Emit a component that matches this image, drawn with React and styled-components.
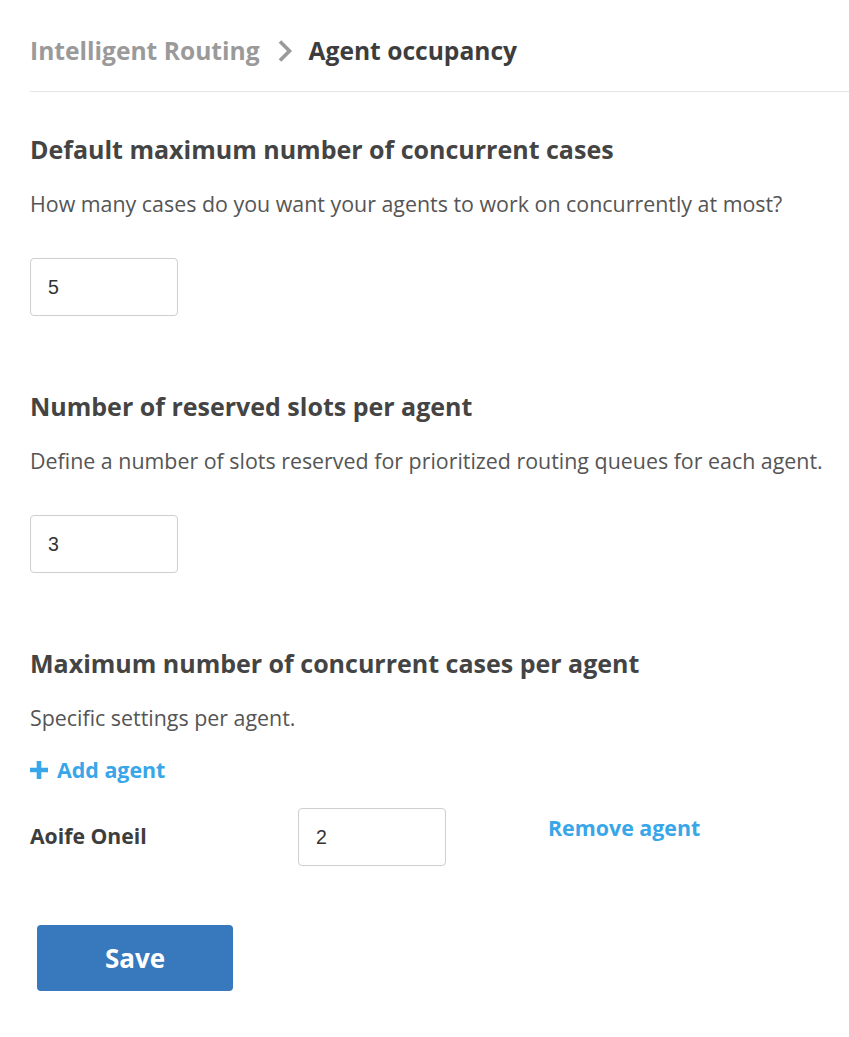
import React from "react";
import styled, { createGlobalStyle } from "styled-components";

const Global = createGlobalStyle`
  html, body { margin: 0; padding: 0; background: #fff; }
  body { font-family: "Open Sans", "Liberation Sans", sans-serif; color: #444; }
  * { box-sizing: border-box; }
`;

const Page = styled.div`
  width: 849px;
  padding: 0 0 40px 30px;
`;

const Breadcrumb = styled.nav`
  display: flex;
  align-items: center;
  height: 92px;
  padding-top: 10px;
  border-bottom: 1px solid #e6e6e6;
  font-size: 24.6px;
  font-weight: 700;
  line-height: 36px;
`;

const Crumb = styled.span`
  color: ${(p) => (p.$current ? "#3d3d3d" : "#9a9a9a")};
`;

const ChevronWrap = styled.span`
  display: inline-flex;
  margin: 0 16px 0 17px;
`;

const Section = styled.section`
  padding-top: ${(p) => p.$top || 40}px;
`;

const Heading = styled.h2`
  margin: 0;
  font-size: 25px;
  font-weight: 700;
  color: #444;
  line-height: 36px;
`;

const Desc = styled.p`
  margin: 22px 0 0;
  font-size: 21.4px;
  color: #555;
  line-height: 30px;
`;

const NumberInput = styled.input`
  display: block;
  width: 148px;
  height: 58px;
  border: 1px solid #cfcfcf;
  border-radius: 4px;
  padding: 0 17px;
  font-family: "Liberation Sans", Arial, sans-serif;
  font-size: 19.5px;
  color: #333;
  margin-top: ${(p) => p.$mt || 0}px;
`;

const AddLink = styled.a`
  display: inline-flex;
  align-items: center;
  gap: 9px;
  margin-top: 22px;
  font-size: 21.4px;
  font-weight: 700;
  line-height: 30px;
  color: #38a6e8;
  text-decoration: none;
`;

const AgentRow = styled.div`
  display: grid;
  grid-template-columns: 268px 250px auto;
  align-items: center;
  margin-top: 23px;
`;

const AgentName = styled.span`
  font-size: 21.2px;
  font-weight: 700;
  color: #3d3d3d;
  line-height: 30px;
  margin-top: -2px;
`;

const RemoveLink = styled.a`
  font-size: 21.4px;
  font-weight: 700;
  line-height: 30px;
  color: #38a6e8;
  margin-bottom: 18px;
`;

const SaveButton = styled.button`
  margin: 59px 0 0 7px;
  width: 196px;
  height: 66px;
  border: none;
  border-radius: 4px;
  background: #3878bd;
  color: #fff;
  font-family: "Open Sans", sans-serif;
  font-size: 26px;
  font-weight: 700;
`;

const Chevron = () => (
  <svg width="16" height="24" viewBox="0 0 16 24">
    <path d="M3 2.5 L12.5 12 L3 21.5" fill="none" stroke="#9a9a9a" strokeWidth="3.6" />
  </svg>
);

const Plus = () => (
  <svg width="18" height="18" viewBox="0 0 18 18">
    <path d="M9 0 V18 M0 9 H18" stroke="#38a6e8" strokeWidth="4.6" />
  </svg>
);

export default function App() {
  return (
    <>
      <Global />
      <Page>
        <Breadcrumb>
          <Crumb>Intelligent Routing</Crumb>
          <ChevronWrap>
            <Chevron />
          </ChevronWrap>
          <Crumb $current>Agent occupancy</Crumb>
        </Breadcrumb>

        <Section $top={39}>
          <Heading>Default maximum number of concurrent cases</Heading>
          <Desc>How many cases do you want your agents to work on concurrently at most?</Desc>
          <NumberInput $mt={39} defaultValue="5" />
        </Section>

        <Section $top={72}>
          <Heading>Number of reserved slots per agent</Heading>
          <Desc>Define a number of slots reserved for prioritized routing queues for each agent.</Desc>
          <NumberInput $mt={39} defaultValue="3" />
        </Section>

        <Section $top={72}>
          <Heading>Maximum number of concurrent cases per agent</Heading>
          <Desc>Specific settings per agent.</Desc>
          <AddLink href="#">
            <Plus />
            Add agent
          </AddLink>
          <AgentRow>
            <AgentName>Aoife Oneil</AgentName>
            <NumberInput defaultValue="2" />
            <RemoveLink>Remove agent</RemoveLink>
          </AgentRow>
        </Section>

        <SaveButton>Save</SaveButton>
      </Page>
    </>
  );
}
